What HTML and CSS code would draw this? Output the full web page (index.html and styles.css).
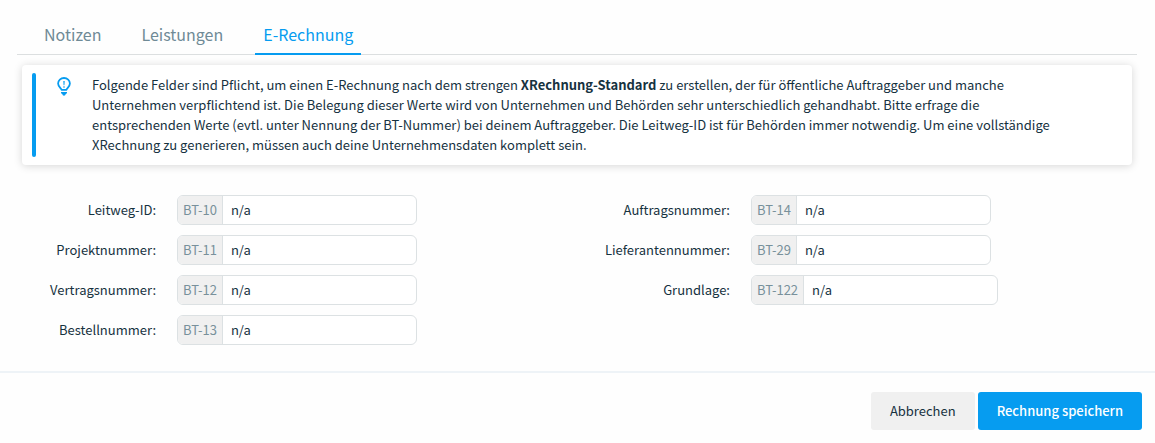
FILE: index.html
```html
<!DOCTYPE html>
<html lang="de">
<head>
<meta charset="utf-8">
<meta name="viewport" content="width=device-width, initial-scale=1">
<title>E-Rechnung</title>
<link rel="stylesheet" href="styles.css">
</head>
<body>
<form class="invoice">
  <nav class="tabs">
    <a class="tab" href="#notizen">Notizen</a>
    <a class="tab" href="#leistungen">Leistungen</a>
    <a class="tab tab-active" href="#e-rechnung" aria-current="page">E-Rechnung</a>
  </nav>
  <section class="hint">
    <div class="hint-bar"></div>
    <svg class="hint-icon" viewBox="0 0 14 19" aria-hidden="true">
      <path d="M4.600 12.900C4.400 11.100 1.100 10 1.100 6.600A5.900 5.600 0 0 1 12.900 6.600C12.900 10 9.600 11.100 9.400 12.900Z" fill="none" stroke="currentColor" stroke-width="1.800" stroke-linejoin="round"/>
      <path d="M6.300 4h1.400l-.3 4.200h-.8z" fill="currentColor"/>
      <circle cx="7" cy="10" r=".8" fill="currentColor"/>
      <path d="M4 15h6v.8q0 1-1.200 1.300Q8.400 18.700 7 18.700T5.200 17.100Q4 16.800 4 15.800z" fill="currentColor"/>
    </svg>
    <p class="hint-text">Folgende Felder sind Pflicht, um einen E-Rechnung nach dem strengen <strong>XRechnung-Standard</strong> zu erstellen, der für öffentliche Auftraggeber und manche Unternehmen verpflichtend ist. Die Belegung dieser Werte wird von Unternehmen und Behörden sehr unterschiedlich gehandhabt. Bitte erfrage die entsprechenden Werte (evtl. unter Nennung der BT-Nummer) bei deinem Auftraggeber. Die Leitweg-ID ist für Behörden immer notwendig. Um eine vollständige XRechnung zu generieren, müssen auch deine Unternehmensdaten komplett sein.</p>
  </section>
  <div class="fields">
    <div class="column">
      <div class="field"><label class="label" for="bt10">Leitweg-ID:</label><div class="group"><span class="addon">BT-10</span><input class="input" id="bt10" type="text" value="n/a"></div></div>
      <div class="field"><label class="label" for="bt11">Projektnummer:</label><div class="group"><span class="addon">BT-11</span><input class="input" id="bt11" type="text" value="n/a"></div></div>
      <div class="field"><label class="label" for="bt12">Vertragsnummer:</label><div class="group"><span class="addon">BT-12</span><input class="input" id="bt12" type="text" value="n/a"></div></div>
      <div class="field"><label class="label" for="bt13">Bestellnummer:</label><div class="group"><span class="addon">BT-13</span><input class="input" id="bt13" type="text" value="n/a"></div></div>
    </div>
    <div class="column">
      <div class="field"><label class="label" for="bt14">Auftragsnummer:</label><div class="group"><span class="addon">BT-14</span><input class="input" id="bt14" type="text" value="n/a"></div></div>
      <div class="field"><label class="label" for="bt29">Lieferantennummer:</label><div class="group"><span class="addon">BT-29</span><input class="input" id="bt29" type="text" value="n/a"></div></div>
      <div class="field"><label class="label" for="bt122">Grundlage:</label><div class="group"><span class="addon">BT-122</span><input class="input" id="bt122" type="text" value="n/a"></div></div>
    </div>
  </div>
  <footer class="actions">
    <button class="button" type="button">Abbrechen</button>
    <button class="button button-primary" type="submit">Rechnung speichern</button>
  </footer>
</form>
</body>
</html>
```
FILE: styles.css
```css
* {
  box-sizing: border-box;
}

body {
  margin: 0;
  background: #fefefe;
  color: #16323f;
  font: 13px/20px "Noto Sans CJK SC", "Open Sans", sans-serif;
}

.tabs {
  display: flex;
  gap: 24px;
  margin: 16px 18px 0 17px;
  padding-left: 19px;
  border-bottom: 1px solid #dcdfe0;
}

.tab {
  margin-bottom: -1px;
  padding: 6px 8px;
  border-bottom: 2px solid transparent;
  color: #6f8a96;
  font-size: 16px;
  line-height: 25px;
  text-decoration: none;
}

.tab-active {
  border-color: #069cf0;
  color: #069cf0;
}

.hint {
  display: flex;
  margin: 10px 23px 0 22px;
  padding: 8px 68px 8px 10px;
  border-radius: 4px;
  background: #fff;
  box-shadow: 0 1px 8px rgba(0, 0, 0, 0.16);
}

.hint-bar {
  flex: none;
  width: 4px;
  border-radius: 2px;
  background: #069cf0;
}

.hint-icon {
  flex: none;
  width: 14px;
  height: 19px;
  margin: 4px 21px 0;
  color: #069cf0;
}

.hint-text {
  margin: 0;
  padding: 2px 0;
}

.fields {
  display: grid;
  grid-template-columns: 1fr 1fr;
  gap: 28px;
  margin: 30px 18px 26px 17px;
}

.column,
.field,
.group {
  display: flex;
}

.column {
  flex-direction: column;
  gap: 10px;
}

.field {
  gap: 21px;
  align-items: center;
}

.label {
  flex: none;
  width: 139px;
  text-align: right;
}

.group {
  height: 30px;
  border: 1px solid #dce1e3;
  border-radius: 6px;
  overflow: hidden;
  background: #fff;
}

.addon {
  padding: 4px 5px;
  border-right: 1px solid #dce1e3;
  background: #f0f0f0;
  color: #78909b;
}

.input {
  width: 193px;
  padding: 0 8px;
  border: 0;
  background: transparent;
  color: inherit;
  font: inherit;
}

.actions {
  display: flex;
  justify-content: flex-end;
  gap: 3px;
  padding: 19px 13px 13px;
  border-top: 2px solid #eef3f7;
}

.button {
  padding: 9px 19px;
  border: 0;
  border-radius: 3px;
  background: #f0f0f0;
  color: inherit;
  font: inherit;
}

.button-primary {
  background: #069cf0;
  color: #fff;
  font-weight: 500;
}
```
